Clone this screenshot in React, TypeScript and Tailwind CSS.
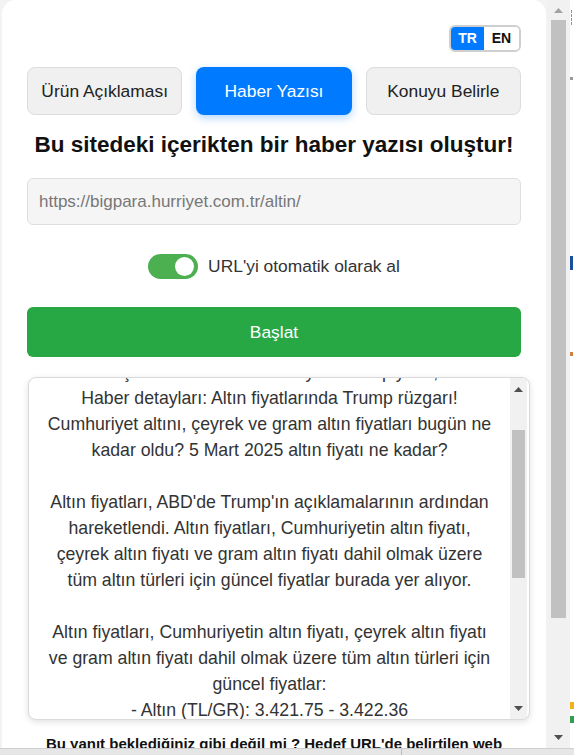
import React from "react";

const TABS = ["Ürün Açıklaması", "Haber Yazısı", "Konuyu Belirle"];

// Lines as they wrap inside the result box.
const RESULT_LINES = [
  "Başlık: 5 Mart 2025 altın fiyatları ve piyasa,",
  "Haber detayları: Altın fiyatlarında Trump rüzgarı!",
  "Cumhuriyet altını, çeyrek ve gram altın fiyatları bugün ne",
  "kadar oldu? 5 Mart 2025 altın fiyatı ne kadar?",
  "",
  "Altın fiyatları, ABD'de Trump'ın açıklamalarının ardından",
  "hareketlendi. Altın fiyatları, Cumhuriyetin altın fiyatı,",
  "çeyrek altın fiyatı ve gram altın fiyatı dahil olmak üzere",
  "tüm altın türleri için güncel fiyatlar burada yer alıyor.",
  "",
  "Altın fiyatları, Cumhuriyetin altın fiyatı, çeyrek altın fiyatı",
  "ve gram altın fiyatı dahil olmak üzere tüm altın türleri için",
  "güncel fiyatlar:",
  "- Altın (TL/GR): 3.421.75 - 3.422.36",
  "- Cumhuriyet Altını: 23.418.00 - 23.695.00",
];

function ArrowUp({ color }: { color: string }) {
  return (
    <svg width="9" height="5" viewBox="0 0 9 5">
      <path d="M0 5 L4.5 0 L9 5 Z" fill={color} />
    </svg>
  );
}

function ArrowDown({ color }: { color: string }) {
  return (
    <svg width="9" height="5" viewBox="0 0 9 5">
      <path d="M0 0 L9 0 L4.5 5 Z" fill={color} />
    </svg>
  );
}

function LangToggle() {
  return (
    <div className="flex justify-end">
      <div className="flex h-[27px] w-[72px] overflow-hidden rounded-[6px] border-2 border-[#cfcfcf] text-[14px] font-bold">
        <button className="flex w-[33px] items-center justify-center bg-[#007bff] text-white">TR</button>
        <button className="flex flex-1 items-center justify-center bg-white text-[#111]">EN</button>
      </div>
    </div>
  );
}

export default function App() {
  const active = 1;
  return (
    <div className="flex h-[755px] w-[574px] flex-col overflow-hidden bg-[#f3f3f3] font-['Liberation_Sans',Arial,sans-serif]">
      <div className="flex min-h-0 flex-1">
        {/* Popup card */}
        <div className="ml-[2px] w-[544px] overflow-hidden rounded-t-[14px] bg-white px-[25px] pt-[25px]">
          <LangToggle />

          {/* Mode tabs */}
          <div className="mt-[15px] grid grid-cols-3 gap-[14px]">
            {TABS.map((t, i) => (
              <button
                key={t}
                className={
                  i === active
                    ? "h-[48px] rounded-[8px] bg-[#007bff] text-[17.4px] text-white shadow-[0_3px_8px_rgba(0,123,255,0.3)]"
                    : "h-[48px] rounded-[8px] border border-[#dcdcdc] bg-[#f0f0f0] text-[17.4px] text-[#222]"
                }
              >
                {t}
              </button>
            ))}
          </div>

          <h1 className="mt-[17px] text-center text-[22.5px] font-bold leading-[26px] text-[#111]">
            Bu sitedeki içerikten bir haber yazısı oluştur!
          </h1>

          <div className="mt-[20px] flex h-[47px] items-center rounded-[6px] border border-[#dedede] bg-[#f5f5f5] px-[11px] text-[17px] text-[#777]">
            https://bigpara.hurriyet.com.tr/altin/
          </div>

          {/* Auto URL switch */}
          <div className="mt-[29px] flex h-[25px] items-center justify-center gap-[10px]">
            <div className="flex h-[25px] w-[50px] items-center justify-end rounded-full bg-[#4caf50] pr-[4px]">
              <div className="h-[19px] w-[19px] rounded-full bg-white" />
            </div>
            <span className="text-[17.4px] text-[#333]">URL'yi otomatik olarak al</span>
          </div>

          <button className="mt-[28px] h-[50px] w-full rounded-[6px] bg-[#28a745] text-[17.4px] text-white">
            Başlat
          </button>

          {/* Result box */}
          <div className="ml-[1px] mt-[20px] flex h-[343px] w-[502px] overflow-hidden rounded-[8px] border border-[#dadada] bg-white shadow-[0_2px_6px_rgba(0,0,0,0.12)]">
            <div className="min-w-0 flex-1 overflow-hidden">
              <div className="-mt-[19px] text-center text-[17.7px] leading-[26px] text-[#333]">
                {RESULT_LINES.map((l, i) => (
                  <div key={i} className="h-[26px] whitespace-pre">
                    {l}
                  </div>
                ))}
              </div>
            </div>
            <div className="mr-[2px] flex w-[17px] flex-col bg-[#f1f1f1]">
              <div className="flex h-[22px] items-center justify-center">
                <ArrowUp color="#505050" />
              </div>
              <div className="mx-[2px] mt-[30px] h-[148px] bg-[#c1c1c1]" />
              <div className="flex-1" />
              <div className="flex h-[22px] items-center justify-center">
                <ArrowDown color="#505050" />
              </div>
            </div>
          </div>

          <p className="mt-[14px] text-center text-[15px] font-bold leading-[20px] text-[#111]">
            Bu yanıt beklediğiniz gibi değil mi ? Hedef URL'de belirtilen web sayfasının içeriğini kontrol edin.
          </p>
        </div>

        {/* Popup page scrollbar */}
        <div className="ml-[1px] flex w-[23px] flex-col bg-[#f1f1f1]">
          <div className="flex h-[20px] items-center justify-center">
            <ArrowUp color="#a3a3a3" />
          </div>
          <div className="mx-[4px] h-[598px] bg-[#c1c1c1]" />
          <div className="flex-1" />
          <div className="flex h-[22px] items-center justify-center">
            <ArrowDown color="#505050" />
          </div>
        </div>

        {/* Sliver of the page behind */}
        <div className="relative flex-1 bg-white">
          <div className="absolute left-[1px] top-[10px] h-[15px] w-[3px] border-l border-dashed border-[#3bb0d0]" />
          <div className="absolute left-0 top-[77px] h-[3px] w-[3px] bg-[#999]" />
          <div className="absolute left-0 top-[256px] h-[14px] w-[3px] bg-[#1a4fa0]" />
          <div className="absolute left-0 top-[352px] h-[4px] w-[3px] bg-[#d08040]" />
          <div className="absolute left-0 top-[702px] h-[7px] w-[4px] bg-[#f0b020]" />
          <div className="absolute left-0 top-[716px] h-[7px] w-[4px] bg-[#30a050]" />
        </div>
      </div>

      {/* Window bottom edge */}
      <div className="flex h-[7px] border-t border-[#cfcfcf] bg-[#e6e6e6]">
        <div className="w-[402px] border-r border-[#bdbdbd]" />
      </div>
    </div>
  );
}
